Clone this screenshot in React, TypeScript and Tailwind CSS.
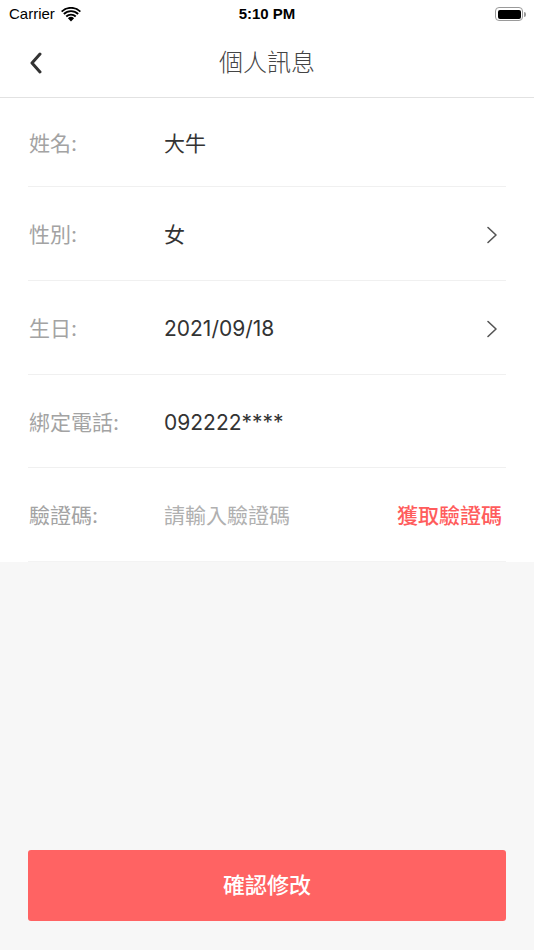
import React from "react";

const CJK = "font-['Inter','Noto_Sans_CJK_TC','Noto_Sans_CJK_SC',sans-serif]";

function Chevron() {
  return (
    <svg width="12" height="18" viewBox="0 0 12 18" fill="none" stroke="#555" strokeWidth="1.6" strokeLinecap="round" strokeLinejoin="round">
      <path d="M2 1.5 L10 9 L2 16.5" />
    </svg>
  );
}

type Row = { label: string; value: string; arrow?: boolean; placeholder?: boolean; action?: string; h: string };

const ROWS: Row[] = [
  { label: "姓名:", value: "大牛", h: "h-[88px]" },
  { label: "性別:", value: "女", arrow: true, h: "h-[93px]" },
  { label: "生日:", value: "2021/09/18", arrow: true, h: "h-[93px]" },
  { label: "綁定電話:", value: "092222****", h: "h-[92px]" },
  { label: "驗證碼:", value: "請輸入驗證碼", placeholder: true, action: "獲取驗證碼", h: "h-[93px]" },
];

export default function App() {
  return (
    <div className={`w-[534px] h-[950px] flex flex-col bg-[#f7f7f7] ${CJK}`}>
      {/* status bar */}
      <div className="bg-white h-[28px] relative flex items-center px-[9px] font-['Liberation_Sans',sans-serif] text-[15px] text-black">
        <span>Carrier</span>
        <svg className="ml-[6px]" width="20" height="15" viewBox="0 0 20 15" fill="#000">
          <path d="M10 14.5 L6.9 11.2 A4.5 4.5 0 0 1 13.1 11.2 Z" />
          <path d="M4.6 8.8 A7.8 7.8 0 0 1 15.4 8.8 L14.1 10.2 A6 6 0 0 0 5.9 10.2 Z" />
          <path d="M2.2 6.3 A11.2 11.2 0 0 1 17.8 6.3 L16.5 7.7 A9.3 9.3 0 0 0 3.5 7.7 Z" />
          <path d="M0 3.9 A14.5 14.5 0 0 1 20 3.9 L18.7 5.3 A12.6 12.6 0 0 0 1.3 5.3 Z" />
        </svg>
        <span className="absolute left-0 right-0 text-center font-bold">5:10 PM</span>
        <div className="ml-auto flex items-center mr-[-1px]">
          <div className="w-[28px] h-[14px] rounded-[4px] border border-[#9a9a9a] p-[1.5px]">
            <div className="w-full h-full rounded-[2px] bg-black" />
          </div>
          <div className="w-[2px] h-[5px] rounded-r-sm bg-[#9a9a9a] ml-[1px]" />
        </div>
      </div>

      {/* nav bar */}
      <div className="bg-white h-[70px] relative flex items-center justify-center border-b border-[#e2e2e2]">
        <svg className="absolute left-[28px] top-[24px]" width="16" height="22" viewBox="0 0 16 22" fill="none" stroke="#333" strokeWidth="3" strokeLinecap="round" strokeLinejoin="round">
          <path d="M12 2 L4 11 L12 20" />
        </svg>
        <span className="text-[24px] font-light text-[#444]">個人訊息</span>
      </div>

      {/* form rows */}
      <div className="bg-white">
        {ROWS.map((r, i) => (
          <div key={r.label}>
            <div className={`${r.h} mx-[28px] pt-[3px] flex items-center`}>
              <span className="w-[136px] pl-[1px] text-[21px] text-[#a3a3a3]">{r.label}</span>
              <span className={`flex-1 text-[21px] ${r.placeholder ? "text-[#b0b0b0]" : "text-[#333]"}`}>{r.value}</span>
              {r.arrow && (
                <span className="mr-[8px]">
                  <Chevron />
                </span>
              )}
              {r.action && <span className="text-[21px] font-medium text-[#ff5c5c] mr-[4px]">{r.action}</span>}
            </div>
            {i < ROWS.length - 1 && <div className="mx-[28px] h-px bg-[#f0f0f0]" />}
          </div>
        ))}
        <div className="mx-[28px] h-px bg-[#f3f3f3]" />
      </div>

      <div className="flex-1" />

      {/* submit */}
      <div className="px-[28px] pb-[29px]">
        <button className="w-full h-[71px] rounded-[3px] bg-[#ff6363] text-white text-[22px] font-medium flex items-center justify-center">
          確認修改
        </button>
      </div>
    </div>
  );
}
